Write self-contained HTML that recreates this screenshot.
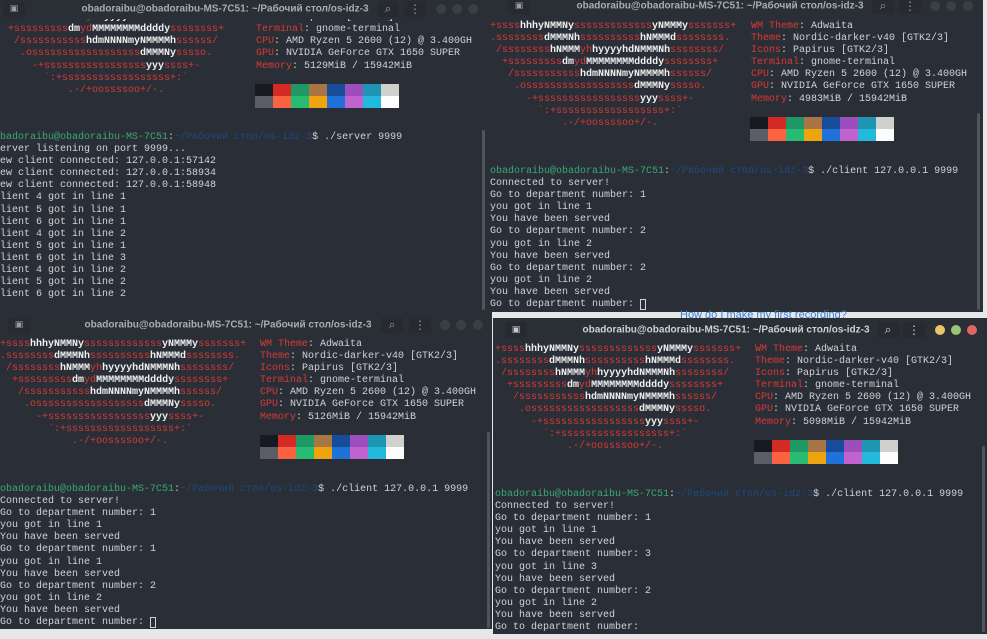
<!DOCTYPE html>
<html><head><meta charset="utf-8"><style>
body{margin:0;width:987px;height:639px;background:#e6e7e9;position:relative;overflow:hidden;font-family:"Liberation Mono",monospace}
.win{position:absolute;background:#2a2e36;overflow:hidden}
.tb{position:absolute;left:0;right:0;top:0;background:#2a2e35;z-index:2}
.tt{position:absolute;font:600 10px "Liberation Sans","Noto Sans CJK SC",sans-serif;color:#a9adb3;white-space:nowrap;transform:translate(-50%,-50%)}
pre{position:absolute;margin:0;font:10px/12.1px "Liberation Mono",monospace;color:#d0d3d6;white-space:pre}
.r{color:#d93a36}.w{color:#f0f0f0;font-weight:bold}.g{color:#3aa873}.b{color:#1e4a80}.l{color:#d93a36}
.sw{position:absolute;display:grid;grid-template-columns:repeat(8,18px);grid-template-rows:12px 12px}
.ic{position:absolute;transform:translate(-50%,-50%);color:#9a9ea4;font:12px "DejaVu Sans",sans-serif}
.c{position:absolute;width:10px;height:10px;border-radius:50%;background:#3a3e45;transform:translate(-50%,-50%)}
.sb{position:absolute;width:3px;background:#50545b;border-radius:2px}
.box{position:absolute;width:22px;height:16px;background:#272a31;border-radius:3px;transform:translate(-50%,-50%)}
</style></head><body>

<!-- W1 -->
<div class="win" style="left:0;top:0;width:487px;height:312px">
<div class="tb" style="height:19px">
 <div class="box" style="left:14px;top:9px"></div><div class="ic" style="left:14px;top:9px;font-size:9px">▣</div>
 <div class="tt" style="left:225px;top:9px">obadoraibu@obadoraibu-MS-7C51: ~/Рабочий стол/os-idz-3</div>
 <div class="box" style="left:388px;top:9px"></div><div class="ic" style="left:388px;top:9px">⌕</div>
 <div class="box" style="left:415px;top:9px"></div><div class="ic" style="left:415px;top:9px">⋮</div>
 <div class="c" style="left:441px;top:9px"></div><div class="c" style="left:457px;top:9px"></div><div class="c" style="left:473px;top:9px"></div>
</div>
<pre style="left:-4px;top:-12px"><span class="r">+ssss</span><span class="w">hhhyNMMNy</span><span class="r">sssssssssssss</span><span class="w">yNMMMy</span><span class="r">sssssss+</span>
<span class="r">.ssssssss</span><span class="w">dMMMNh</span><span class="r">ssssssssss</span><span class="w">hNMMMd</span><span class="r">ssssssss.</span>
 <span class="r">/ssssssss</span><span class="w">hNMMM</span><span class="r">yh</span><span class="w">hyyyyhdNMMMNh</span><span class="r">ssssssss/</span>
  <span class="r">+sssssssss</span><span class="w">dm</span><span class="r">yd</span><span class="w">MMMMMMMMddddy</span><span class="r">ssssssss+</span>
   <span class="r">/sssssssssss</span><span class="w">hdmNNNNmyNMMMMh</span><span class="r">ssssss/</span>
    <span class="r">.ossssssssssssssssss</span><span class="w">dMMMNy</span><span class="r">sssso.</span>
      <span class="r">-+sssssssssssssssss</span><span class="w">yyy</span><span class="r">ssss+-</span>
        <span class="r">`:+ssssssssssssssssss+:`</span>
            <span class="r">.-/+oossssoo+/-.</span></pre>
<pre style="left:256px;top:-12px"><span class="l">WM Theme</span>: Adwaita
<span class="l">Theme</span>: Nordic-darker-v40 [GTK2/3]
<span class="l">Icons</span>: Papirus [GTK2/3]
<span class="l">Terminal</span>: gnome-terminal
<span class="l">CPU</span>: AMD Ryzen 5 2600 (12) @ 3.400GH
<span class="l">GPU</span>: NVIDIA GeForce GTX 1650 SUPER
<span class="l">Memory</span>: 5129MiB / 15942MiB</pre>
<div class="sw" style="left:255px;top:84px"><i style="background:#181a22"></i><i style="background:#d42a25"></i><i style="background:#1f9865"></i><i style="background:#a87644"></i><i style="background:#174c9a"></i><i style="background:#9b4ebc"></i><i style="background:#1d95b3"></i><i style="background:#d0d0cc"></i><i style="background:#5b5e66"></i><i style="background:#fb6240"></i><i style="background:#27bb73"></i><i style="background:#eda40f"></i><i style="background:#1e72d8"></i><i style="background:#c063cf"></i><i style="background:#22b9dc"></i><i style="background:#fdfdfd"></i></div>
<pre style="left:-6px;top:132px"><span class="g">obadoraibu@obadoraibu-MS-7C51</span>:<span class="b">~/Рабочий стол/os-idz-3</span>$ ./server 9999
Server listening on port 9999...
New client connected: 127.0.0.1:57142
New client connected: 127.0.0.1:58934
New client connected: 127.0.0.1:58948
Client 4 got in line 1
Client 5 got in line 1
Client 6 got in line 1
Client 4 got in line 2
Client 5 got in line 1
Client 6 got in line 3
Client 4 got in line 2
Client 5 got in line 2
Client 6 got in line 2</pre>
<div class="sb" style="left:482px;top:130px;height:180px"></div>
</div>

<!-- W2 -->
<div class="win" style="left:487px;top:0;width:496px;height:312px">
<div class="tb" style="height:14px">
 <div class="box" style="left:32px;top:6px"></div><div class="ic" style="left:32px;top:6px;font-size:9px">▣</div>
 <div class="tt" style="left:233px;top:6px">obadoraibu@obadoraibu-MS-7C51: ~/Рабочий стол/os-idz-3</div>
 <div class="box" style="left:396px;top:6px"></div><div class="ic" style="left:396px;top:6px">⌕</div>
 <div class="box" style="left:423px;top:6px"></div><div class="ic" style="left:423px;top:6px">⋮</div>
 <div class="c" style="left:448px;top:6px"></div><div class="c" style="left:464px;top:6px"></div><div class="c" style="left:481px;top:6px"></div>
</div>
<pre style="left:3px;top:21px"><span class="r">+ssss</span><span class="w">hhhyNMMNy</span><span class="r">sssssssssssss</span><span class="w">yNMMMy</span><span class="r">sssssss+</span>
<span class="r">.ssssssss</span><span class="w">dMMMNh</span><span class="r">ssssssssss</span><span class="w">hNMMMd</span><span class="r">ssssssss.</span>
 <span class="r">/ssssssss</span><span class="w">hNMMM</span><span class="r">yh</span><span class="w">hyyyyhdNMMMNh</span><span class="r">ssssssss/</span>
  <span class="r">+sssssssss</span><span class="w">dm</span><span class="r">yd</span><span class="w">MMMMMMMMddddy</span><span class="r">ssssssss+</span>
   <span class="r">/sssssssssss</span><span class="w">hdmNNNNmyNMMMMh</span><span class="r">ssssss/</span>
    <span class="r">.ossssssssssssssssss</span><span class="w">dMMMNy</span><span class="r">sssso.</span>
      <span class="r">-+sssssssssssssssss</span><span class="w">yyy</span><span class="r">ssss+-</span>
        <span class="r">`:+ssssssssssssssssss+:`</span>
            <span class="r">.-/+oossssoo+/-.</span></pre>
<pre style="left:264px;top:21px"><span class="l">WM Theme</span>: Adwaita
<span class="l">Theme</span>: Nordic-darker-v40 [GTK2/3]
<span class="l">Icons</span>: Papirus [GTK2/3]
<span class="l">Terminal</span>: gnome-terminal
<span class="l">CPU</span>: AMD Ryzen 5 2600 (12) @ 3.400GH
<span class="l">GPU</span>: NVIDIA GeForce GTX 1650 SUPER
<span class="l">Memory</span>: 4983MiB / 15942MiB</pre>
<div class="sw" style="left:263px;top:117px"><i style="background:#181a22"></i><i style="background:#d42a25"></i><i style="background:#1f9865"></i><i style="background:#a87644"></i><i style="background:#174c9a"></i><i style="background:#9b4ebc"></i><i style="background:#1d95b3"></i><i style="background:#d0d0cc"></i><i style="background:#5b5e66"></i><i style="background:#fb6240"></i><i style="background:#27bb73"></i><i style="background:#eda40f"></i><i style="background:#1e72d8"></i><i style="background:#c063cf"></i><i style="background:#22b9dc"></i><i style="background:#fdfdfd"></i></div>
<pre style="left:3px;top:166px"><span class="g">obadoraibu@obadoraibu-MS-7C51</span>:<span class="b">~/Рабочий стол/os-idz-3</span>$ ./client 127.0.0.1 9999
Connected to server!
Go to department number: 1
you got in line 1
You have been served
Go to department number: 2
you got in line 2
You have been served
Go to department number: 2
you got in line 2
You have been served
Go to department number: <span style="outline:1px solid #d0d3d6;outline-offset:-1px"> </span></pre>
<div class="sb" style="left:490px;top:113px;height:197px"></div>
</div>

<div style="position:absolute;left:680px;top:309px;font:11px 'Liberation Sans',sans-serif;color:#3d7fd0">How do I make my first recording?</div>

<!-- W3 -->
<div class="win" style="left:0;top:312px;width:492px;height:317px">
<div class="tb" style="height:26px">
 <div class="box" style="left:19px;top:13px"></div><div class="ic" style="left:19px;top:13px;font-size:9px">▣</div>
 <div class="tt" style="left:228px;top:13px">obadoraibu@obadoraibu-MS-7C51: ~/Рабочий стол/os-idz-3</div>
 <div class="box" style="left:392px;top:13px"></div><div class="ic" style="left:392px;top:13px">⌕</div>
 <div class="box" style="left:420px;top:13px"></div><div class="ic" style="left:420px;top:13px">⋮</div>
 <div class="c" style="left:445px;top:13px"></div><div class="c" style="left:461px;top:13px"></div><div class="c" style="left:478px;top:13px"></div>
</div>
<pre style="left:0;top:27px"><span class="r">+ssss</span><span class="w">hhhyNMMNy</span><span class="r">sssssssssssss</span><span class="w">yNMMMy</span><span class="r">sssssss+</span>
<span class="r">.ssssssss</span><span class="w">dMMMNh</span><span class="r">ssssssssss</span><span class="w">hNMMMd</span><span class="r">ssssssss.</span>
 <span class="r">/ssssssss</span><span class="w">hNMMM</span><span class="r">yh</span><span class="w">hyyyyhdNMMMNh</span><span class="r">ssssssss/</span>
  <span class="r">+sssssssss</span><span class="w">dm</span><span class="r">yd</span><span class="w">MMMMMMMMddddy</span><span class="r">ssssssss+</span>
   <span class="r">/sssssssssss</span><span class="w">hdmNNNNmyNMMMMh</span><span class="r">ssssss/</span>
    <span class="r">.ossssssssssssssssss</span><span class="w">dMMMNy</span><span class="r">sssso.</span>
      <span class="r">-+sssssssssssssssss</span><span class="w">yyy</span><span class="r">ssss+-</span>
        <span class="r">`:+ssssssssssssssssss+:`</span>
            <span class="r">.-/+oossssoo+/-.</span></pre>
<pre style="left:260px;top:27px"><span class="l">WM Theme</span>: Adwaita
<span class="l">Theme</span>: Nordic-darker-v40 [GTK2/3]
<span class="l">Icons</span>: Papirus [GTK2/3]
<span class="l">Terminal</span>: gnome-terminal
<span class="l">CPU</span>: AMD Ryzen 5 2600 (12) @ 3.400GH
<span class="l">GPU</span>: NVIDIA GeForce GTX 1650 SUPER
<span class="l">Memory</span>: 5126MiB / 15942MiB</pre>
<div class="sw" style="left:260px;top:123px"><i style="background:#181a22"></i><i style="background:#d42a25"></i><i style="background:#1f9865"></i><i style="background:#a87644"></i><i style="background:#174c9a"></i><i style="background:#9b4ebc"></i><i style="background:#1d95b3"></i><i style="background:#d0d0cc"></i><i style="background:#5b5e66"></i><i style="background:#fb6240"></i><i style="background:#27bb73"></i><i style="background:#eda40f"></i><i style="background:#1e72d8"></i><i style="background:#c063cf"></i><i style="background:#22b9dc"></i><i style="background:#fdfdfd"></i></div>
<pre style="left:0;top:172px"><span class="g">obadoraibu@obadoraibu-MS-7C51</span>:<span class="b">~/Рабочий стол/os-idz-3</span>$ ./client 127.0.0.1 9999
Connected to server!
Go to department number: 1
you got in line 1
You have been served
Go to department number: 1
you got in line 1
You have been served
Go to department number: 2
you got in line 2
You have been served
Go to department number: <span style="outline:1px solid #d0d3d6;outline-offset:-1px"> </span></pre>
<div class="sb" style="left:487px;top:120px;height:196px"></div>
</div>

<!-- W4 -->
<div class="win" style="left:493px;top:318px;width:494px;height:316px">
<div class="tb" style="height:25px">
 <div class="box" style="left:23px;top:12px"></div><div class="ic" style="left:23px;top:12px;font-size:9px;color:#c8ccd2">▣</div>
 <div class="tt" style="left:233px;top:12px;color:#cdd0d5">obadoraibu@obadoraibu-MS-7C51: ~/Рабочий стол/os-idz-3</div>
 <div class="box" style="left:395px;top:12px"></div><div class="ic" style="left:395px;top:12px;color:#d0d3d8">⌕</div>
 <div class="box" style="left:421px;top:12px"></div><div class="ic" style="left:421px;top:12px;color:#d0d3d8">⋮</div>
 <div class="c" style="left:447px;top:12px;background:#e8c56b"></div><div class="c" style="left:463px;top:12px;background:#9cc27a"></div><div class="c" style="left:479px;top:12px;background:#e06666"></div>
</div>
<pre style="left:2px;top:26px"><span class="r">+ssss</span><span class="w">hhhyNMMNy</span><span class="r">sssssssssssss</span><span class="w">yNMMMy</span><span class="r">sssssss+</span>
<span class="r">.ssssssss</span><span class="w">dMMMNh</span><span class="r">ssssssssss</span><span class="w">hNMMMd</span><span class="r">ssssssss.</span>
 <span class="r">/ssssssss</span><span class="w">hNMMM</span><span class="r">yh</span><span class="w">hyyyyhdNMMMNh</span><span class="r">ssssssss/</span>
  <span class="r">+sssssssss</span><span class="w">dm</span><span class="r">yd</span><span class="w">MMMMMMMMddddy</span><span class="r">ssssssss+</span>
   <span class="r">/sssssssssss</span><span class="w">hdmNNNNmyNMMMMh</span><span class="r">ssssss/</span>
    <span class="r">.ossssssssssssssssss</span><span class="w">dMMMNy</span><span class="r">sssso.</span>
      <span class="r">-+sssssssssssssssss</span><span class="w">yyy</span><span class="r">ssss+-</span>
        <span class="r">`:+ssssssssssssssssss+:`</span>
            <span class="r">.-/+oossssoo+/-.</span></pre>
<pre style="left:262px;top:26px"><span class="l">WM Theme</span>: Adwaita
<span class="l">Theme</span>: Nordic-darker-v40 [GTK2/3]
<span class="l">Icons</span>: Papirus [GTK2/3]
<span class="l">Terminal</span>: gnome-terminal
<span class="l">CPU</span>: AMD Ryzen 5 2600 (12) @ 3.400GH
<span class="l">GPU</span>: NVIDIA GeForce GTX 1650 SUPER
<span class="l">Memory</span>: 5098MiB / 15942MiB</pre>
<div class="sw" style="left:261px;top:122px"><i style="background:#181a22"></i><i style="background:#d42a25"></i><i style="background:#1f9865"></i><i style="background:#a87644"></i><i style="background:#174c9a"></i><i style="background:#9b4ebc"></i><i style="background:#1d95b3"></i><i style="background:#d0d0cc"></i><i style="background:#5b5e66"></i><i style="background:#fb6240"></i><i style="background:#27bb73"></i><i style="background:#eda40f"></i><i style="background:#1e72d8"></i><i style="background:#c063cf"></i><i style="background:#22b9dc"></i><i style="background:#fdfdfd"></i></div>
<pre style="left:2px;top:171px"><span class="g">obadoraibu@obadoraibu-MS-7C51</span>:<span class="b">~/Рабочий стол/os-idz-3</span>$ ./client 127.0.0.1 9999
Connected to server!
Go to department number: 1
you got in line 1
You have been served
Go to department number: 3
you got in line 3
You have been served
Go to department number: 2
you got in line 2
You have been served
Go to department number:</pre>
<div class="sb" style="left:489px;top:128px;height:186px"></div>
</div>
</body></html>
